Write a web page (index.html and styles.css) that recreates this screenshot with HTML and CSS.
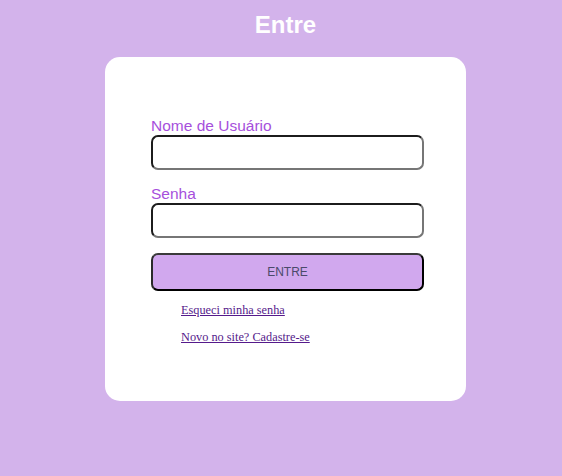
FILE: index.html
```html
<!DOCTYPE html>
<html lang="pt-BR">
<head>
<meta charset="utf-8">
<title>Entre</title>
<link rel="stylesheet" href="styles.css">
</head>
<body>
<main class="page">
  <h1 class="title">Entre</h1>
  <div class="card">
    <form class="form">
      <label class="label" for="user">Nome de Usuário</label>
      <input class="field" id="user" type="text">
      <label class="label label-second" for="pass">Senha</label>
      <input class="field" id="pass" type="password">
      <button class="btn" type="button">ENTRE</button>
    </form>
    <ul class="links">
      <li><a class="link" href="#">Esqueci minha senha</a></li>
      <li><a class="link" href="#">Novo no site? Cadastre-se</a></li>
    </ul>
  </div>
</main>
</body>
</html>
```
FILE: styles.css
```css
html, body {
  margin: 0;
  padding: 0;
}
body {
  background: #d3b3eb;
  font-family: "Liberation Sans", Arial, sans-serif;
  min-height: 476px;
}
.page {
  display: flex;
  flex-direction: column;
  align-items: center;
  padding-left: 9px;
  padding-top: 10px;
}
.title {
  margin: 0;
  color: #ffffff;
  font-size: 24px;
  font-weight: bold;
  line-height: 30px;
}
.card {
  margin-top: 17px;
  width: 361px;
  height: 344px;
  box-sizing: border-box;
  background: #ffffff;
  border-radius: 15px;
  padding: 59px 46px 0 46px;
}
.form {
  display: flex;
  flex-direction: column;
  width: 273px;
}
.label {
  color: #a64fdc;
  font-size: 15.5px;
  line-height: 19px;
}
.label-second {
  margin-top: 14px;
}
.field {
  box-sizing: border-box;
  width: 273px;
  height: 35px;
  margin: 0;
  border: 2px solid;
  border-color: #1c1c1c #767676 #767676 #1c1c1c;
  border-radius: 7px;
  background: #ffffff;
}
.btn {
  box-sizing: border-box;
  margin-top: 15px;
  width: 273px;
  height: 38px;
  background: #d1a8ee;
  border: 2px solid;
  border-color: #3a3a3a #000000 #000000 #2a2a2a;
  border-radius: 7px;
  color: #4a4a6a;
  font-family: "Liberation Sans", Arial, sans-serif;
  font-size: 12px;
}
.links {
  list-style: none;
  margin: 9px 0 0 0;
  padding: 0 0 0 30px;
  display: flex;
  flex-direction: column;
  gap: 8px;
}
.link {
  font-family: "Liberation Serif", "Times New Roman", serif;
  font-size: 12.3px;
  line-height: 18px;
  color: #551a8b;
}
```
